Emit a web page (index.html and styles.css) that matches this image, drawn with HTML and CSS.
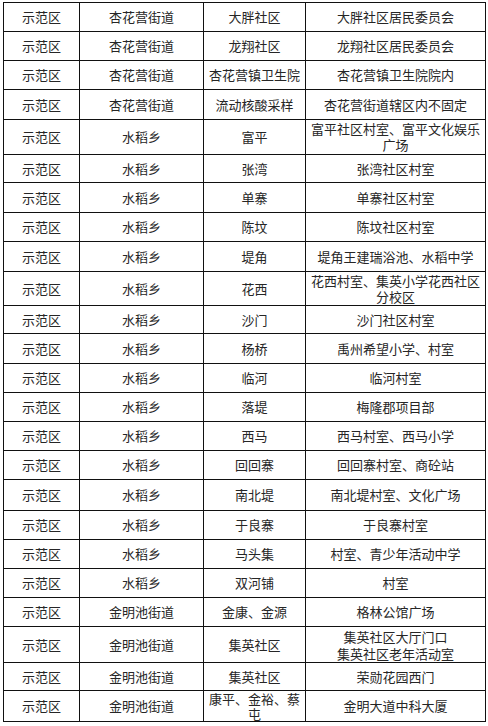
FILE: index.html
```html
<!DOCTYPE html>
<html lang="zh-CN">
<head>
<meta charset="utf-8">
<title>核酸采样点</title>
<link rel="stylesheet" href="styles.css">
</head>
<body>
<div class="sheet">
  <div class="c">示范区</div><div class="c">杏花营街道</div><div class="c">大胖社区</div><div class="c">大胖社区居民委员会</div>
  <div class="c">示范区</div><div class="c">杏花营街道</div><div class="c">龙翔社区</div><div class="c">龙翔社区居民委员会</div>
  <div class="c">示范区</div><div class="c">杏花营街道</div><div class="c">杏花营镇卫生院</div><div class="c">杏花营镇卫生院院内</div>
  <div class="c">示范区</div><div class="c">杏花营街道</div><div class="c">流动核酸采样</div><div class="c">杏花营街道辖区内不固定</div>
  <div class="c">示范区</div><div class="c">水稻乡</div><div class="c">富平</div><div class="c">富平社区村室、富平文化娱乐广场</div>
  <div class="c">示范区</div><div class="c">水稻乡</div><div class="c">张湾</div><div class="c">张湾社区村室</div>
  <div class="c">示范区</div><div class="c">水稻乡</div><div class="c">单寨</div><div class="c">单寨社区村室</div>
  <div class="c">示范区</div><div class="c">水稻乡</div><div class="c">陈坟</div><div class="c">陈坟社区村室</div>
  <div class="c">示范区</div><div class="c">水稻乡</div><div class="c">堤角</div><div class="c">堤角王建瑞浴池、水稻中学</div>
  <div class="c">示范区</div><div class="c">水稻乡</div><div class="c">花西</div><div class="c">花西村室、集英小学花西社区分校区</div>
  <div class="c">示范区</div><div class="c">水稻乡</div><div class="c">沙门</div><div class="c">沙门社区村室</div>
  <div class="c">示范区</div><div class="c">水稻乡</div><div class="c">杨桥</div><div class="c">禹州希望小学、村室</div>
  <div class="c">示范区</div><div class="c">水稻乡</div><div class="c">临河</div><div class="c">临河村室</div>
  <div class="c">示范区</div><div class="c">水稻乡</div><div class="c">落堤</div><div class="c">梅隆郡项目部</div>
  <div class="c">示范区</div><div class="c">水稻乡</div><div class="c">西马</div><div class="c">西马村室、西马小学</div>
  <div class="c">示范区</div><div class="c">水稻乡</div><div class="c">回回寨</div><div class="c">回回寨村室、商砼站</div>
  <div class="c">示范区</div><div class="c">水稻乡</div><div class="c">南北堤</div><div class="c">南北堤村室、文化广场</div>
  <div class="c">示范区</div><div class="c">水稻乡</div><div class="c">于良寨</div><div class="c">于良寨村室</div>
  <div class="c">示范区</div><div class="c">水稻乡</div><div class="c">马头集</div><div class="c">村室、青少年活动中学</div>
  <div class="c">示范区</div><div class="c">水稻乡</div><div class="c">双河铺</div><div class="c">村室</div>
  <div class="c">示范区</div><div class="c">金明池街道</div><div class="c">金康、金源</div><div class="c">格林公馆广场</div>
  <div class="c">示范区</div><div class="c">金明池街道</div><div class="c">集英社区</div><div class="c loose">集英社区大厅门口<br>集英社区老年活动室</div>
  <div class="c">示范区</div><div class="c">金明池街道</div><div class="c">集英社区</div><div class="c">荣勋花园西门</div>
  <div class="c">示范区</div><div class="c">金明池街道</div><div class="c tight">康平、金裕、蔡屯</div><div class="c">金明大道中科大厦</div>
</div>
</body>
</html>
```
FILE: styles.css
```css
html, body {
  margin: 0;
  padding: 0;
  background: #ffffff;
}

.sheet {
  display: grid;
  grid-template-columns: 75px 123px 101px 179px;
  grid-template-rows: 28px 28px 28px 29px 34px 27px 29px 28px 29px 33px 27px 29px 28px 28px 28px 28px 30px 28px 28px 28px 28px 35px 27px 30px;
  gap: 1px;
  padding: 1px;
  background: #111111;
  width: max-content;
  margin: 2px 0 0 3px;
}

.c {
  background: #ffffff;
  display: flex;
  align-items: center;
  justify-content: center;
  text-align: center;
  padding: 0 4px;
  font-family: "Noto Sans CJK SC", "Noto Sans", sans-serif;
  font-size: 13px;
  line-height: 16px;
  color: #262626;
}

.loose {
  line-height: 17px;
}

.tight {
  line-height: 15px;
}
```
